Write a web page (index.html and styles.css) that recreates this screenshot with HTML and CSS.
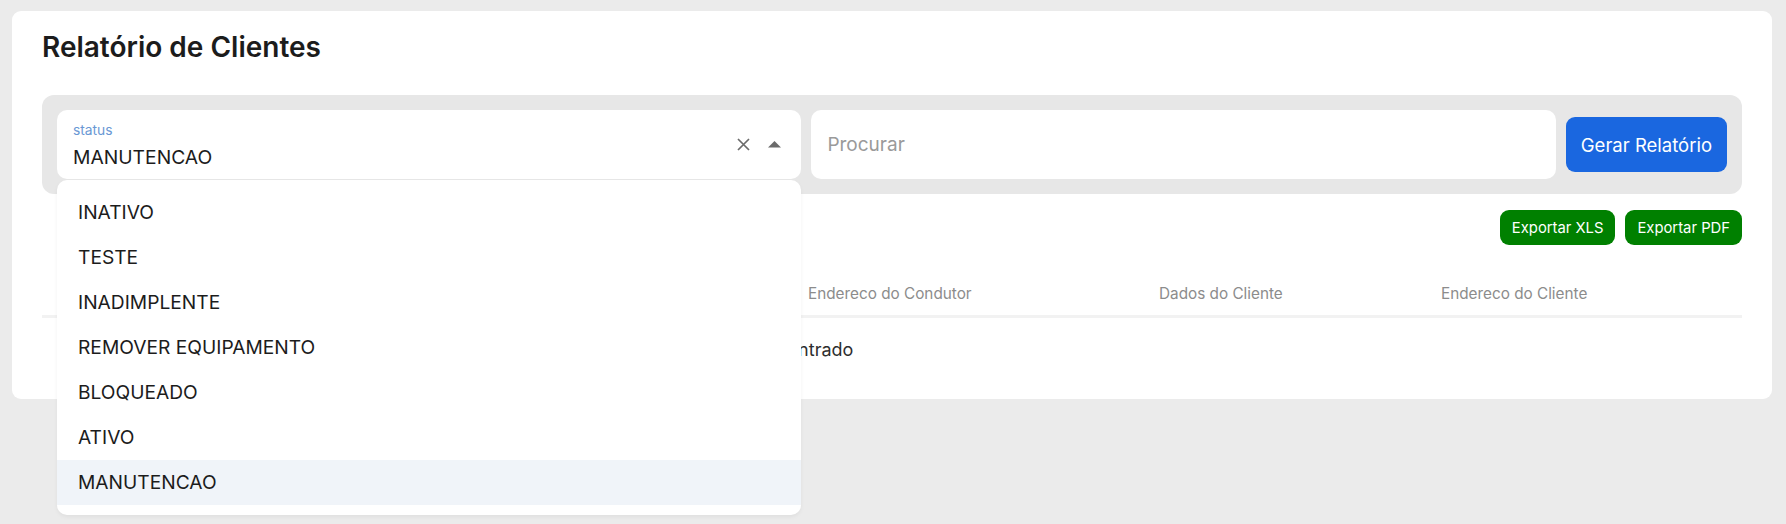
FILE: index.html
```html
<!DOCTYPE html>
<html>
<head>
  <meta charset="utf-8">
  <title>Relatório de Clientes</title>
  <link rel="stylesheet" href="styles.css">
</head>
<body>
  <div class="card">
    <h1 class="titulo">Relatório de Clientes</h1>

    <!-- filtros do relatorio -->
    <div class="filtros">
      <div class="campo-select">
        <div class="select-valor">
          <span class="select-label">status</span>
          <span class="select-texto">MANUTENCAO</span>
        </div>
        <div class="select-icones">
          <svg class="icone-x" width="13" height="13" viewBox="0 0 13 13">
            <path d="M1 1L12 12M12 1L1 12" stroke="#6b6b6b" stroke-width="1.7" fill="none"/>
          </svg>
          <svg class="icone-seta" width="13" height="7" viewBox="0 0 13 7">
            <path d="M0 6.5L6.5 0L13 6.5Z" fill="#6b6b6b"/>
          </svg>
        </div>

        <ul class="menu">
          <li class="menu-item">INATIVO</li>
          <li class="menu-item">TESTE</li>
          <li class="menu-item">INADIMPLENTE</li>
          <li class="menu-item">REMOVER EQUIPAMENTO</li>
          <li class="menu-item">BLOQUEADO</li>
          <li class="menu-item">ATIVO</li>
          <li class="menu-item selecionado">MANUTENCAO</li>
        </ul>
      </div>

      <input class="campo-busca" type="text" placeholder="Procurar">
      <button type="button" class="btn-gerar">Gerar Relatório</button>
    </div>

    <div class="exportar">
      <button type="button" class="btn-exportar">Exportar XLS</button>
      <button type="button" class="btn-exportar">Exportar PDF</button>
    </div>

    <table class="tabela">
      <tr>
        <th class="col-nome">Nome</th>
        <th class="col-condutor">Dados do Condutor</th>
        <th class="col-end-condutor">Endereco do Condutor</th>
        <th class="col-cliente">Dados do Cliente</th>
        <th class="col-end-cliente">Endereco do Cliente</th>
      </tr>
      <tr>
        <td colspan="5" class="vazio">Nenhum registro encontrado</td>
      </tr>
    </table>
  </div>
</body>
</html>
```

FILE: styles.css
```css
* {
  box-sizing: border-box;
}

html {
  background-color: #ebebeb;
}

body {
  margin: 0;
  min-height: 524px;
  padding: 11px 14px 0 12px;
  background-color: #ebebeb;
  font-family: Inter, "Noto Sans", sans-serif;
  color: #1f1f1f;
}

.card {
  background-color: white;
  border-radius: 9px;
  padding: 20px 30px 20px 30px;
}

.titulo {
  margin: 0 0 31px 0;
  font-size: 28px;
  line-height: 33px;
  font-weight: 600;
  color: #1c1c1c;
}

.filtros {
  display: grid;
  grid-template-columns: 1fr 1fr auto;
  gap: 10px;
  align-items: center;
  padding: 15px;
  background-color: #e7e7e7;
  border-radius: 12px;
}

.campo-select {
  position: relative;
  display: flex;
  align-items: center;
  height: 69px;
  padding: 0 20px 0 16px;
  background-color: white;
  border-radius: 10px;
}

.select-valor {
  flex: 1;
  display: flex;
  flex-direction: column;
  padding-top: 2px;
}

.select-label {
  font-size: 13.8px;
  line-height: 16px;
  color: #6a98d4;
}

.select-texto {
  margin-top: 7px;
  font-size: 19.3px;
  line-height: 24px;
  color: #1c1c1c;
}

.select-icones {
  display: flex;
  align-items: center;
  gap: 18px;
}

.icone-x {
  display: block;
}

.icone-seta {
  display: block;
  margin-top: -1px;
}

/* lista aberta do select */
.menu {
  position: absolute;
  top: 100%;
  left: 0;
  right: 0;
  z-index: 5;
  margin: 1px 0 0 0;
  padding: 10px 0;
  list-style: none;
  background-color: white;
  border-radius: 10px;
  box-shadow: 0 2px 4px rgba(0, 0, 0, 0.05);
}

.menu-item {
  height: 45px;
  padding-left: 21px;
  font-size: 19.2px;
  line-height: 45px;
  color: #1c1c1c;
}

.menu-item.selecionado {
  background-color: #f0f4f9;
}

.campo-busca {
  height: 69px;
  padding: 0 16px;
  border: none;
  border-radius: 10px;
  background-color: white;
  font-family: Inter, "Noto Sans", sans-serif;
  font-size: 19px;
  color: #1c1c1c;
  outline: none;
}

.campo-busca::placeholder {
  color: #9a9a9a;
}

.btn-gerar {
  height: 55px;
  padding: 0 15px;
  background-color: #1a67e0;
  color: white;
  border: none;
  border-radius: 9px;
  font-family: Inter, "Noto Sans", sans-serif;
  font-size: 18.5px;
  cursor: pointer;
}

.exportar {
  display: flex;
  justify-content: flex-end;
  gap: 10px;
  margin-top: 16px;
}

.btn-exportar {
  height: 35px;
  padding: 0 12px;
  background-color: #008000;
  color: white;
  border: none;
  border-radius: 9px;
  font-family: Inter, "Noto Sans", sans-serif;
  font-size: 14.8px;
  cursor: pointer;
}

.tabela {
  width: 100%;
  margin-top: 25px;
  border-collapse: collapse;
}

.tabela th {
  padding: 12px 16px 9px 16px;
  text-align: left;
  font-size: 15.3px;
  line-height: 24px;
  font-weight: normal;
  color: #8c8c8c;
  border-bottom: 3px solid #f2f2f2;
}

.col-nome {
  width: 300px;
}

.col-condutor {
  width: 450px;
}

.col-end-condutor {
  width: 351px;
}

.col-cliente {
  width: 282px;
}

.col-end-cliente {
  width: 317px;
}

.tabela td {
  padding: 18px 16px 16px 16px;
  font-size: 18px;
  line-height: 27px;
  color: #2e2e2e;
}

.vazio {
  padding-left: 567px !important;
}
```
